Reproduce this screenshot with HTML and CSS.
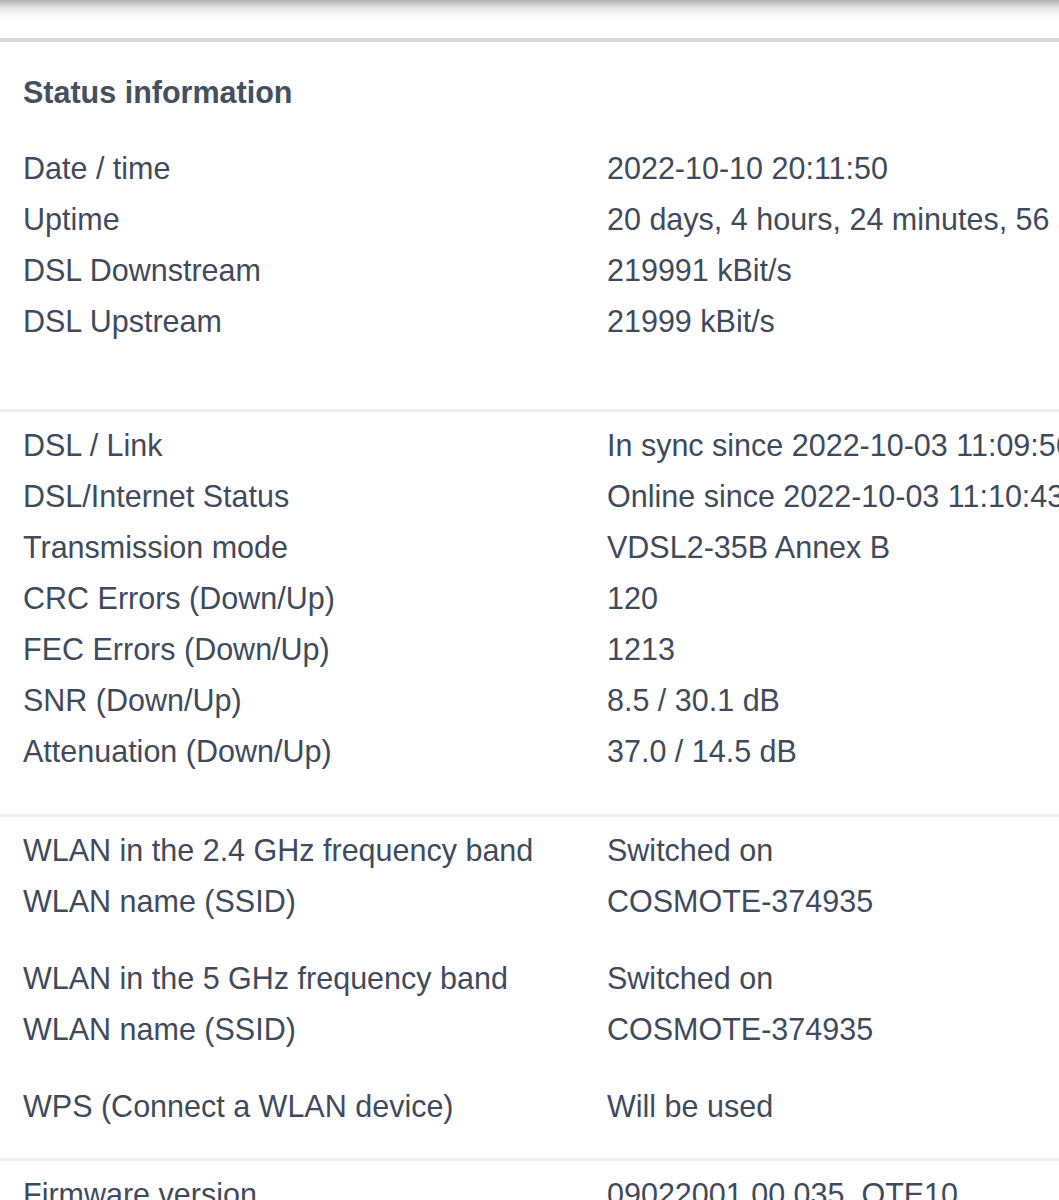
FILE: index.html
```html
<!DOCTYPE html>
<html lang="en">
<head>
    <meta charset="UTF-8">
    <meta name="viewport" content="width=device-width, initial-scale=1.0">
    <title>Status information</title>
    <link rel="stylesheet" href="styles.css">
</head>
<body>
    <div class="page">
        <div class="topbar"></div>

        <div class="section first">
            <h2 class="title">Status information</h2>
            <div class="group">
                <div class="row"><span class="label">Date / time</span><span class="value">2022-10-10 20:11:50</span></div>
                <div class="row"><span class="label">Uptime</span><span class="value">20 days, 4 hours, 24 minutes, 56 seconds</span></div>
                <div class="row"><span class="label">DSL Downstream</span><span class="value">219991 kBit/s</span></div>
                <div class="row"><span class="label">DSL Upstream</span><span class="value">21999 kBit/s</span></div>
            </div>
        </div>

        <div class="section dsl">
            <div class="group">
                <div class="row"><span class="label">DSL / Link</span><span class="value">In sync since 2022-10-03 11:09:56</span></div>
                <div class="row"><span class="label">DSL/Internet Status</span><span class="value">Online since 2022-10-03 11:10:43</span></div>
                <div class="row"><span class="label">Transmission mode</span><span class="value">VDSL2-35B Annex B</span></div>
                <div class="row"><span class="label">CRC Errors (Down/Up)</span><span class="value">120</span></div>
                <div class="row"><span class="label">FEC Errors (Down/Up)</span><span class="value">1213</span></div>
                <div class="row"><span class="label">SNR (Down/Up)</span><span class="value">8.5 / 30.1 dB</span></div>
                <div class="row"><span class="label">Attenuation (Down/Up)</span><span class="value">37.0 / 14.5 dB</span></div>
            </div>
        </div>

        <div class="section wlan">
            <div class="group">
                <div class="row"><span class="label">WLAN in the 2.4 GHz frequency band</span><span class="value">Switched on</span></div>
                <div class="row"><span class="label">WLAN name (SSID)</span><span class="value">COSMOTE-374935</span></div>
            </div>
            <div class="group">
                <div class="row"><span class="label">WLAN in the 5 GHz frequency band</span><span class="value">Switched on</span></div>
                <div class="row"><span class="label">WLAN name (SSID)</span><span class="value">COSMOTE-374935</span></div>
            </div>
            <div class="group">
                <div class="row"><span class="label">WPS (Connect a WLAN device)</span><span class="value">Will be used</span></div>
            </div>
        </div>

        <div class="section">
            <div class="group">
                <div class="row"><span class="label">Firmware version</span><span class="value">09022001.00.035_OTE10</span></div>
            </div>
        </div>
    </div>
</body>
</html>
```

FILE: styles.css
```css
html, body {
    margin: 0;
    padding: 0;
    background: #fff;
    overflow: hidden;
}
.page {
    width: 1059px;
    overflow: hidden;
    font-family: "Liberation Sans", Arial, sans-serif;
    color: #3f4b5c;
}
.topbar {
    height: 38px;
    background: linear-gradient(to bottom, #aeaeae 0, #e6e6e6 8px, #fbfbfb 16px, #fff 24px);
    border-bottom: 4px solid #dadada;
}
.section {
    border-top: 3px solid #efefef;
    padding: 8px 0 0 23px;
}
.topbar + .section {
    border-top: none;
    padding-top: 30px;
}
.title {
    margin: 0 0 31px;
    font-size: 30.5px;
    line-height: 40px;
    font-weight: bold;
    color: #44505f;
}
.group {
    margin-bottom: 26px;
}
.first .group {
    margin-bottom: 62px;
}
.dsl .group {
    margin-bottom: 37px;
}
.row {
    display: flex;
    height: 51px;
    line-height: 51px;
    font-size: 30.5px;
    white-space: nowrap;
}
.row .label {
    flex: 0 0 584px;
}
.row .value {
    flex: none;
}
```
